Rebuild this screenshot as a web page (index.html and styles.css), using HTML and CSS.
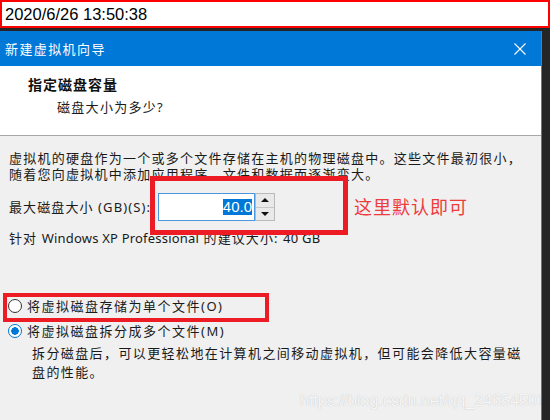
FILE: index.html
```
<!DOCTYPE html>
<html lang="zh-CN">
<head>
  <meta charset="UTF-8" />
  <title>新建虚拟机向导</title>
  <link rel="stylesheet" href="styles.css">
</head>
<body>
  <!-- capture timestamp -->
  <div class="stamp">2020/6/26 13:50:38</div>

  <div class="dialog">
    <div class="titlebar">
      <span class="title">新建虚拟机向导</span>
      <svg class="close" width="12" height="12" viewBox="0 0 12 12">
        <path d="M0.5,0.5 L11.5,11.5 M11.5,0.5 L0.5,11.5" stroke="#fff" stroke-width="1.1" fill="none"/>
      </svg>
    </div>

    <div class="head">
      <h1>指定磁盘容量</h1>
      <p>磁盘大小为多少?</p>
    </div>

    <div class="body">
      <p class="intro">虚拟机的硬盘作为一个或多个文件存储在主机的物理磁盘中。这些文件最初很小，<br>随着您向虚拟机中添加应用程序、文件和数据而逐渐变大。</p>

      <div class="size-row">
        <label class="size-label">最大磁盘大小 (GB)(S):</label>
        <div class="spin">
          <div class="spin-input"><span class="sel">40.0</span></div>
          <div class="spin-btns">
            <span class="spin-btn"><i class="arrow-up"></i></span>
            <span class="spin-btn"><i class="arrow-down"></i></span>
          </div>
        </div>
        <span class="note">这里默认即可</span>
      </div>

      <p class="hint">针对 <span class="latin">Windows XP Professional</span> 的建议大小: <span class="latin">40 GB</span></p>

      <div class="radio-row first"><span class="radio"></span>将虚拟磁盘存储为单个文件(O)</div>
      <div class="radio-row"><span class="radio checked"></span>将虚拟磁盘拆分成多个文件(M)</div>

      <p class="desc">拆分磁盘后，可以更轻松地在计算机之间移动虚拟机，但可能会降低大容量磁<br>盘的性能。</p>

      <!-- annotation overlays -->
      <div class="mark mark-size"></div>
      <div class="mark mark-radio"></div>
      <div class="watermark">https://blog.csdn.net/qq_24654501</div>
    </div>
  </div>
</body>
</html>
```

FILE: styles.css
```
/* BASE */
* {
  margin: 0; padding: 0;
  box-sizing: border-box;
}
body {
  width: 550px; height: 420px;
  overflow: hidden;
  background: #252526;
  font-family: "Noto Sans", "Noto Sans CJK SC", sans-serif;
  color: #1a1a1a;
}

/* TIMESTAMP BAR */
.stamp {
  height: 28px;
  background: #fff;
  border: 2px solid #f00;
  padding-left: 3px;
  font-family: "Liberation Sans", sans-serif;
  font-size: 16.5px; line-height: 24px;
  color: #000;
}

/* DIALOG */
.dialog {
  margin-top: 3px;
  width: 542px; height: 389px;
  border-right: 1px solid #2b86d8;
  overflow: hidden;
  display: flex; flex-direction: column;
}
.titlebar {
  height: 35px;
  background: #0078d7;
  display: flex; align-items: center;
  justify-content: space-between;
  padding: 0 15px 0 5px;
}
.title {
  color: #fff;
  font-size: 13px; letter-spacing: 1.4px;
  line-height: 16px;
}
.close { display: block; }

/* HEADER */
.head {
  height: 70px;
  background: #fff;
  border-bottom: 1px solid #a8a8a8;
  padding-top: 10px;
}
.head h1 {
  font-size: 14px; font-weight: 700;
  letter-spacing: 1px;
  line-height: 18px;
  padding-left: 28px;
  color: #111;
}
.head p {
  font-size: 13px; letter-spacing: 1.3px;
  line-height: 18px;
  margin-top: 4px;
  padding-left: 57px;
}

/* BODY */
.body {
  position: relative;
  flex: 1;
  background: #f0f0f0;
  padding: 14px 0 0 9px;
  font-size: 13px; letter-spacing: 1.25px;
}
.intro { line-height: 16px; }

.size-row {
  display: flex; align-items: center;
  margin-top: 11px;
  height: 28px;
}
.size-label { width: 149px; line-height: 16px; letter-spacing: 1.1px; }
.spin { display: flex; height: 28px; }
.spin-input {
  width: 97px;
  background: #fff;
  border: 1px solid #4a97e0;
  display: flex; align-items: center;
  justify-content: flex-end;
  padding-right: 2px;
}
.sel {
  background: #0078d7; color: #fff;
  font-family: "Liberation Sans", sans-serif;
  font-size: 15px; letter-spacing: 0;
  line-height: 15px;
  padding: 0 0 1px 0;
}
.spin-btns {
  width: 20px;
  display: flex; flex-direction: column;
  border: 1px solid #b9b9b9;
  background: #e9e9e9;
}
.spin-btn {
  flex: 1;
  display: flex; align-items: center; justify-content: center;
}
.spin-btn + .spin-btn { border-top: 1px solid #c8c8c8; }
.arrow-up, .arrow-down {
  width: 0; height: 0;
  border-left: 4px solid transparent;
  border-right: 4px solid transparent;
}
.arrow-up { border-bottom: 4px solid #111; }
.arrow-down { border-top: 4px solid #111; }

.note {
  margin-left: 79px;
  color: #ee3b3b;
  font-size: 18px; letter-spacing: 1px;
  line-height: 22px;
}

.hint { margin-top: 9px; line-height: 16px; letter-spacing: 1.1px; }
.latin { letter-spacing: 0.2px; }

/* RADIOS */
.radio-row {
  display: flex; align-items: center;
  height: 25px;
  margin-left: -1px;
  line-height: 16px;
  letter-spacing: 1.5px;
}
.radio-row.first { margin-top: 47px; }
.radio {
  width: 14px; height: 14px;
  border: 1px solid #333;
  border-radius: 50%;
  background: #fff;
  margin-right: 5px;
  flex-shrink: 0;
}
.radio.checked {
  border-color: #0078d7;
  background: radial-gradient(circle, #0078d7 0 3.5px, #fff 4px);
}

.desc {
  line-height: 19px;
  margin-top: 1px;
  padding-left: 23px;
  letter-spacing: 1.4px;
}

/* ANNOTATIONS */
.mark {
  position: absolute;
  border: 5px solid #ed1c24;
}
.mark-size { left: 150px; top: 40px; width: 198px; height: 59px; }
.mark-radio {
  left: 3px; top: 157px; width: 266px; height: 29px;
  border-width: 4px;
}
.watermark {
  position: absolute;
  left: 300px; top: 256px;
  white-space: nowrap;
  font-family: "Liberation Sans", sans-serif;
  font-size: 16px; letter-spacing: 0;
  line-height: 18px;
  color: #f7f7f7;
  text-shadow: 0 0 1px #b8b8b8;
}
```
